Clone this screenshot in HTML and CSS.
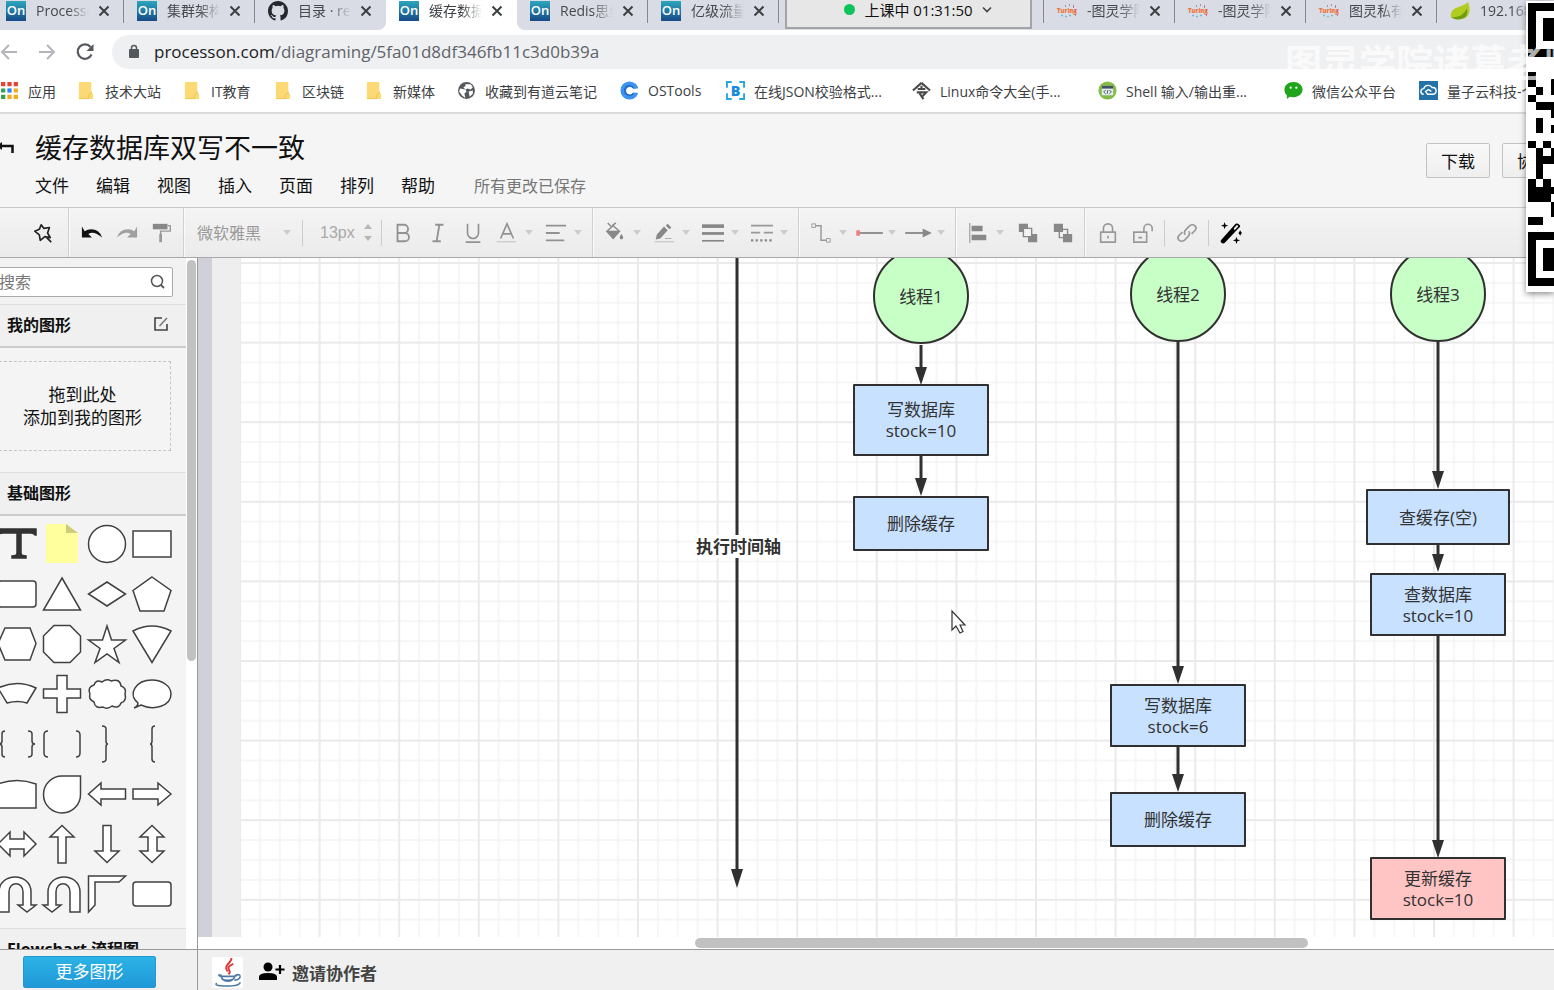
FILE: index.html
```html
<!DOCTYPE html>
<html lang="zh-CN">
<head>
<meta charset="utf-8">
<title>缓存数据库双写不一致</title>
<link rel="stylesheet" href="styles.css">
</head>
<body>
<svg class="defs" width="0" height="0" aria-hidden="true">
  <symbol id="close" viewBox="0 0 14 14"><path d="M2.500 2.500l9 9m0-9l-9 9" fill="none" stroke="#3c4043" stroke-width="2"/></symbol>
  <symbol id="folder" viewBox="0 0 18 20"><path d="M2 1h11q1 0 1 1v10l2 2v4q0 1-1 1H2q-1 0-1-1V2q0-1 1-1z" fill="#fbd975"/><path d="M11 19v-4q0-2 3-2v-2M1 18.500h11" fill="none" stroke="#f0c64e"/></symbol>
  <symbol id="caret" viewBox="0 0 8 6"><path d="M0 0h8L4 5z" fill="#ccc"/></symbol>
</svg>

<nav class="tabs" aria-label="标签页">
  <div class="tab"><span class="on">On</span><span class="tab-label">Processon</span><button class="tab-x" aria-label="关闭"><svg><use href="#close"/></svg></button></div>
  <div class="tab"><span class="on">On</span><span class="tab-label">集群架构图</span><button class="tab-x" aria-label="关闭"><svg><use href="#close"/></svg></button></div>
  <div class="tab before-active"><svg class="fav" viewBox="0 0 16 16"><path fill="#24292e" d="M8 0C3.580 0 0 3.580 0 8c0 3.540 2.290 6.530 5.470 7.590.4.070.55-.17.55-.38v-1.490c-2.010.37-2.530-.49-2.690-.94-.09-.23-.48-.94-.82-1.130-.28-.15-.68-.52-.01-.53.63-.01 1.080.58 1.230.82.72 1.210 1.870.87 2.330.66.070-.52.280-.87.510-1.070-1.780-.2-3.640-.89-3.640-3.950 0-.87.310-1.590.820-2.150-.08-.2-.36-1.020.08-2.120 0 0 .67-.21 2.200.82a7.600 7.600 0 014 0c1.530-1.040 2.200-.82 2.200-.82.44 1.100.16 1.920.08 2.120.51.560.82 1.270.82 2.150 0 3.070-1.870 3.750-3.650 3.950.29.25.54.73.54 1.480v2.200c0 .21.15.46.55.38A8 8 0 0016 8c0-4.420-3.580-8-8-8z"/></svg><span class="tab-label">目录 · redis</span><button class="tab-x" aria-label="关闭"><svg><use href="#close"/></svg></button></div>
  <div class="tab active"><span class="on">On</span><span class="tab-label">缓存数据库</span><button class="tab-x" aria-label="关闭"><svg><use href="#close"/></svg></button></div>
  <div class="tab after-active"><span class="on">On</span><span class="tab-label">Redis思维</span><button class="tab-x" aria-label="关闭"><svg><use href="#close"/></svg></button></div>
  <div class="tab"><span class="on">On</span><span class="tab-label">亿级流量</span><button class="tab-x" aria-label="关闭"><svg><use href="#close"/></svg></button></div>
  <div class="tab covered"></div>
  <div class="tab"><svg class="fav" viewBox="0 0 20 20"><text class="fav-text" x="0" y="12">Turing</text><path d="M4 14.500h2m2 1h2m2-1h2" stroke="#78b7d8" stroke-width="1.500"/><path d="M8 5h1m3-1h1m3 1h1m1 5h1m-1 4h1m-3-8h1" stroke="#a66ca0" stroke-width="1.500"/></svg><span class="tab-label">-图灵学院</span><button class="tab-x" aria-label="关闭"><svg><use href="#close"/></svg></button></div>
  <div class="tab"><svg class="fav" viewBox="0 0 20 20"><text class="fav-text" x="0" y="12">Turing</text><path d="M4 14.500h2m2 1h2m2-1h2" stroke="#78b7d8" stroke-width="1.500"/><path d="M8 5h1m3-1h1m3 1h1m1 5h1m-1 4h1m-3-8h1" stroke="#a66ca0" stroke-width="1.500"/></svg><span class="tab-label">-图灵学院</span><button class="tab-x" aria-label="关闭"><svg><use href="#close"/></svg></button></div>
  <div class="tab"><svg class="fav" viewBox="0 0 20 20"><text class="fav-text" x="0" y="12">Turing</text><path d="M4 14.500h2m2 1h2m2-1h2" stroke="#78b7d8" stroke-width="1.500"/><path d="M8 5h1m3-1h1m3 1h1m1 5h1m-1 4h1m-3-8h1" stroke="#a66ca0" stroke-width="1.500"/></svg><span class="tab-label">图灵私有</span><button class="tab-x" aria-label="关闭"><svg><use href="#close"/></svg></button></div>
  <div class="tab tail"><svg class="fav" viewBox="0 0 20 20"><path d="M18 1c3 8 2 16-6 17-4 1-8 0-11-2C0 5 10 8 18 1z" fill="#b3cc22"/><path d="M1 16c7 1 13-2 16-9 1 7-1 10-6 11-4 1-8 0-10-2z" fill="#6c9e12"/></svg><span class="tab-label">192.168.0</span></div>
  <button class="meeting"><span class="dot"></span>上课中 01:31:50<svg width="10" height="8" viewBox="0 0 10 8"><path d="M1 1.500l4 4 4-4" fill="none" stroke="#444" stroke-width="1.600"/></svg></button>
</nav>

<div class="urlbar">
  <button class="nav" aria-label="后退"><svg width="20" height="20" viewBox="0 0 20 20"><path d="M18 10H3m7-7l-7 7 7 7" fill="none" stroke="#b4b6b9" stroke-width="2"/></svg></button>
  <button class="nav" aria-label="前进"><svg width="20" height="20" viewBox="0 0 20 20"><path d="M2 10h15m-7-7l7 7-7 7" fill="none" stroke="#b4b6b9" stroke-width="2"/></svg></button>
  <button class="nav" aria-label="刷新"><svg width="20" height="20" viewBox="0 0 20 20"><path d="M16.500 12.500A7.200 7.200 0 1 1 15.500 5" fill="none" stroke="#55585c" stroke-width="2.200"/><path d="M18.500 2v7h-7z" fill="#55585c"/></svg></button>
  <div class="address"><svg width="12" height="16" viewBox="0 0 12 16"><rect x="1" y="5" width="10" height="9" rx="1" fill="#55585c"/><path d="M3.500 6V4a2.500 2.500 0 0 1 5 0v2" fill="none" stroke="#55585c" stroke-width="1.500"/></svg><a href="#"><b>processon.com</b>/diagraming/5fa01d8df346fb11c3d0b39a</a></div>
</div>

<nav class="bookmarks" aria-label="书签">
  <a href="#"><svg viewBox="0 0 18 18"><path d="M1 1h4v4H1zM7 1h4v4H7zM13 1h4v4h-4z" fill="#e34335"/><path d="M1 7h4v4H1zM1 13h4v4H1z" fill="#34a056"/><path d="M7 7h4v4H7z" fill="#2a85f0"/><path d="M13 7h4v4h-4zM7 13h4v4H7zM13 13h4v4h-4z" fill="#f3aa18"/></svg>应用</a>
  <a href="#"><svg><use href="#folder"/></svg>技术大站</a>
  <a href="#"><svg><use href="#folder"/></svg>IT教育</a>
  <a href="#"><svg><use href="#folder"/></svg>区块链</a>
  <a href="#"><svg><use href="#folder"/></svg>新媒体</a>
  <a href="#"><svg viewBox="0 0 18 18"><circle cx="9" cy="9" r="8" fill="#55585c"/><path d="M3 7l5 1 1 2-2 2 1 4-3-2-3-4zM8 3l5 0 2 3-2 2-3-1-2 1-2-2 2-1zM11 10l4-1 0 3-3 3z" fill="#fff"/></svg>收藏到有道云笔记</a>
  <a href="#"><svg viewBox="0 0 20 20"><circle cx="10" cy="10" r="9.500" fill="#3b92f3"/><path d="M20 7.500l-6 1a4 4 0 1 0 0 3.500l6 .5z" fill="#fff"/><path d="M14 7a5 5 0 1 0 0 6" fill="none" stroke="#1b5ba5" stroke-width="1.200"/></svg>OSTools</a>
  <a href="#"><svg viewBox="0 0 20 20"><path d="M1 7V1h5m8 0h5v6m0 6v6h-5m-8 0H1v-6" fill="none" stroke="#25a7df" stroke-width="2"/><text class="logo-b" x="5" y="16">B</text></svg>在线JSON校验格式...</a>
  <a href="#"><svg viewBox="0 0 20 20"><path d="M10 2L1 10M10 2l9 8M6 8.500l8 0M5 12h10l-4 4M8 13l4 6M10 5v3" fill="none" stroke="#4a4a4a" stroke-width="2.200"/></svg>Linux命令大全(手...</a>
  <a href="#"><svg viewBox="0 0 20 20"><circle cx="10" cy="10" r="9.500" fill="#83bd45"/><rect x="4" y="5" width="12" height="10" rx="1" fill="#e5ecef"/><path d="M4 5h12v3H4z" fill="#45505c"/><path d="M8 9.500L6 11.500l2 2m4-4l2 2-2 2m-1.500-4l-1 4" fill="none" stroke="#45505c"/></svg>Shell 输入/输出重...</a>
  <a href="#"><svg viewBox="0 0 20 20"><path d="M10 1c5.500 0 9.500 3.500 9.500 8s-4 8-9.500 8q-2 0-4-.5L3 19v-4C1 13.500.5 11 .5 9c0-4.500 4-8 9.500-8z" fill="#1fa51b"/><circle cx="7" cy="7" r="1.200" fill="#fff"/><circle cx="13" cy="7" r="1.200" fill="#fff"/></svg>微信公众平台</a>
  <a href="#"><svg viewBox="0 0 20 20"><path d="M0 0h20v20H0z" fill="#2472a8"/><path d="M5 14a3 3 0 0 1 0-6 5 5 0 0 1 9-1 3.500 3.500 0 0 1 1 7H9l-2-3 3-2 3 2" fill="none" stroke="#fff" stroke-width="1.500"/></svg>量子云科技-个</a>
</nav>

<header class="head">
  <button class="back" aria-label="返回"><svg width="16" height="18" viewBox="0 0 16 18"><path d="M0 7h12.500v7" fill="none" stroke="#111" stroke-width="2.500"/><path d="M2 3v8L-3 7z" fill="#111"/></svg></button>
  <div class="head-main">
    <h1>缓存数据库双写不一致</h1>
    <div class="menu"><button>文件</button><button>编辑</button><button>视图</button><button>插入</button><button>页面</button><button>排列</button><button>帮助</button><span>所有更改已保存</span></div>
  </div>
  <div class="head-actions"><button>下载</button><button>协作</button></div>
</header>

<div class="toolbar" role="toolbar">
  <div class="group first"><button class="tool" aria-label="图标"><svg viewBox="0 0 24 24"><path d="M10 3l3 4 6-1-2 6 3 5-6-1-5 4-1-6-5-4 5-2zM16 17l5 5" fill="none" stroke="#222" stroke-width="1.800" stroke-linejoin="round"/></svg></button></div>
  <div class="group"><button class="tool" aria-label="撤销"><svg viewBox="0 0 24 24"><path d="M1 5v12h11l-4-4q6-4 15 4-3-9-12-9-4 0-7 2z" fill="#111"/></svg></button><button class="tool" aria-label="重做"><svg viewBox="0 0 24 24"><path d="M23 5v12H12l4-4Q10 9 1 17q3-9 12-9 4 0 7 2z" fill="#a0a0a0"/></svg></button><button class="tool" aria-label="格式刷"><svg viewBox="0 0 24 24"><path d="M2 2h16v6H2z" fill="#888"/><path d="M18 4h3v6H10.500v4" fill="none" stroke="#999" stroke-width="1.500"/><path d="M9 13h3v9H9z" fill="#999"/></svg></button></div>
  <div class="group">
    <select class="font" aria-label="字体"><option>微软雅黑</option></select><svg class="caret"><use href="#caret"/></svg>
    <i class="sep"></i><input class="size" aria-label="字号" value="13px"><svg class="spin" viewBox="0 0 8 18"><path d="M0 5h8L4 0zM0 12h8l-4 5z" fill="#b5b5b5"/></svg>
    <i class="sep"></i>
    <button class="tool" aria-label="粗体"><svg viewBox="0 0 24 24"><path d="M6 3h7a4.500 4.500 0 0 1 0 9H6zm0 9h8a4.500 4.500 0 0 1 0 9H6z" fill="none" stroke="#929292" stroke-width="2"/></svg></button>
    <button class="tool" aria-label="斜体"><svg viewBox="0 0 24 24"><path d="M9 3h9M6 21h9m-1.500-18l-3 18" fill="none" stroke="#929292" stroke-width="2"/></svg></button>
    <button class="tool" aria-label="下划线"><svg viewBox="0 0 24 24"><path d="M6 2v10a6 6 0 0 0 12 0V2M4 22h16" fill="none" stroke="#929292" stroke-width="1.800"/></svg></button>
    <button class="tool drop" aria-label="文字颜色"><svg viewBox="0 0 24 24"><path d="M5 18l7-16 7 16M8 13h8" fill="none" stroke="#929292" stroke-width="1.800"/><path d="M1 21.500h21" stroke="#ccc" stroke-width="1.500"/></svg><svg class="caret"><use href="#caret"/></svg></button>
    <button class="tool drop" aria-label="对齐"><svg viewBox="0 0 24 24"><path d="M1 4h22M1 12h15M1 20h20" stroke="#929292" stroke-width="2"/></svg><svg class="caret"><use href="#caret"/></svg></button>
  </div>
  <div class="group">
    <button class="tool drop" aria-label="填充"><svg viewBox="0 0 24 24"><path d="M2 10L10 3l8 7-8 9z" fill="#888"/><path d="M5 9.500l5-4.500 5 4.500z" fill="#eee"/><path d="M4 1l4 4M13 1L9 4" stroke="#888" stroke-width="1.500"/><path d="M19 13q4 5 0 6-4-1 0-6z" fill="#888"/></svg><svg class="caret"><use href="#caret"/></svg></button>
    <button class="tool drop" aria-label="线条颜色"><svg viewBox="0 0 24 24"><path d="M4 14L12 5l4 4-8 9-5 1zM14 4l2-2 4 4-2 2z" fill="#888"/><path d="M13 18h7" stroke="#aaa"/><path d="M2 21.500h21" stroke="#ccc" stroke-width="1.500"/></svg><svg class="caret"><use href="#caret"/></svg></button>
    <button class="tool drop" aria-label="线宽"><svg viewBox="0 0 24 24"><path d="M0 4.500h24" stroke="#888" stroke-width="4"/><path d="M0 12.500h24" stroke="#888" stroke-width="3"/><path d="M0 20.500h24" stroke="#888" stroke-width="1.800"/></svg><svg class="caret"><use href="#caret"/></svg></button>
    <button class="tool drop" aria-label="线型"><svg viewBox="0 0 24 24"><path d="M0 4h24M0 11.500h10m4 0h10" stroke="#999" stroke-width="2"/><path d="M0 20h24" stroke="#888" stroke-width="2.500" stroke-dasharray="2.500 2.500"/></svg><svg class="caret"><use href="#caret"/></svg></button>
  </div>
  <div class="group">
    <button class="tool drop" aria-label="连线"><svg viewBox="0 0 24 24"><path d="M6 4h6v16h6" fill="none" stroke="#999" stroke-width="1.600"/><path d="M2 2h4v4H2zM18 18h4v4h-4z" fill="#eee" stroke="#999"/></svg><svg class="caret"><use href="#caret"/></svg></button>
    <button class="tool drop" aria-label="起点"><svg viewBox="0 0 24 24"><path d="M-2 12h28" stroke="#888" stroke-width="2"/><path d="M-3 9l4 0v6h-4z" fill="#f08080"/></svg><svg class="caret"><use href="#caret"/></svg></button>
    <button class="tool drop" aria-label="终点"><svg viewBox="0 0 24 24"><path d="M-3 12h20" stroke="#888" stroke-width="2"/><path d="M16 7l10 5-10 5z" fill="#888"/></svg><svg class="caret"><use href="#caret"/></svg></button>
  </div>
  <div class="group">
    <button class="tool drop" aria-label="排列"><svg viewBox="0 0 24 24"><path d="M3 1v22" stroke="#aaa" stroke-width="1.500"/><path d="M5 4h12v6H5zM5 14h16v6H5z" fill="#888"/></svg><svg class="caret"><use href="#caret"/></svg></button>
    <button class="tool" aria-label="置于顶层"><svg viewBox="0 0 24 24"><path d="M2 2h10v9H2zM12 13h10v9H12z" fill="#888"/><path d="M7 7h9v9H7z" fill="#f3f3f3" stroke="#888" stroke-width="1.500"/></svg></button>
    <button class="tool" aria-label="置于底层"><svg viewBox="0 0 24 24"><path d="M8 8h9v9H8z" fill="none" stroke="#888" stroke-width="1.500"/><path d="M2 2h10v9H2zM12 13h10v9H12z" fill="#888"/></svg></button>
  </div>
  <div class="group last">
    <button class="tool" aria-label="锁定"><svg viewBox="0 0 24 24"><path d="M4 11h16v11H4zM7 11V7a5 5 0 0 1 10 0v4M12 15v3" fill="none" stroke="#999" stroke-width="1.800"/></svg></button>
    <button class="tool" aria-label="解锁"><svg viewBox="0 0 24 24"><path d="M2 11h14v11H2zM13 11V7a4.500 4.500 0 0 1 9 0v3M7 17h4" fill="none" stroke="#999" stroke-width="1.800"/></svg></button>
    <i class="sep"></i>
    <button class="tool" aria-label="链接"><svg viewBox="0 0 24 24"><path d="M10 14q-2-3 1-6l4-4q3-2 5.500 0t.5 5l-4 4M14 10q2 3-1 6l-4 4q-3 2-5.500 0T3 15l4-4" fill="none" stroke="#999" stroke-width="1.800"/></svg></button>
    <i class="sep"></i>
    <button class="tool" aria-label="美化"><svg viewBox="0 0 24 24"><path d="M1 20L17 2q2-1 4 1t0 3L5 23q-2 1-3.500-.5T1 20z" fill="#000"/><path d="M15 7l3.500-4 1.500 1.500L16 9z" fill="#eee"/><path d="M5 0l1 3 3 1-3 1-1 3-1-3-3-1 3-1zM18 16l1 3 3 1-3 1-1 3-1-3-3-1 3-1zM22 9l1 2 1 1-1 1-1 2-1-2-1-1 1-1z" fill="#000"/></svg></button>
  </div>
</div>

<main class="work">
  <aside class="side">
    <div class="side-scroll">
      <div class="search"><input type="text" placeholder="搜索" aria-label="搜索"><svg viewBox="0 0 16 16"><circle cx="7" cy="7" r="5.500" fill="none" stroke="#555" stroke-width="1.500"/><path d="M11 11l3 3" stroke="#555" stroke-width="1.800"/></svg></div>
      <h2>我的图形<button aria-label="编辑"><svg width="16" height="16" viewBox="0 0 16 16"><path d="M9 2H2v12h12V8" fill="none" stroke="#444" stroke-width="1.600"/><path d="M6.500 10L14 2" stroke="#777" stroke-width="1.500"/></svg></button></h2>
      <div class="drop-area"><p>拖到此处<br>添加到我的图形</p></div>
      <h2>基础图形</h2>
      <div class="shapes">
        <svg viewBox="0 0 44 44"><path d="M3 7h38v6h-1q-1-2-4-2H26v20q0 3 5 3v2H17v-2q5 0 5-3V11H8q-4 0-5 2z" fill="#323232" stroke="#323232"/></svg>
        <svg viewBox="0 0 44 44"><path d="M6 2h20l12 9v30H6z" fill="#ffff9e" stroke="none"/><path d="M26 2l12 9H26z" fill="#cccc7b" stroke="none"/></svg>
        <svg viewBox="0 0 44 44"><circle cx="22" cy="22" r="18.500"/></svg>
        <svg viewBox="0 0 44 44"><path d="M3 9h38v26H3z"/></svg>
        <svg viewBox="0 0 44 44"><rect x="3" y="9" width="38" height="26" rx="3"/></svg>
        <svg viewBox="0 0 44 44"><path d="M22 6l18.500 32h-37z"/></svg>
        <svg viewBox="0 0 44 44"><path d="M22 10l18.500 12L22 34 3.500 22z"/></svg>
        <svg viewBox="0 0 44 44"><path d="M22 5l19 13.500L34 39H10L3 18.500z"/></svg>
        <svg viewBox="0 0 44 44"><path d="M10 6h25l6 15.500L35 38H10L3 21.500z"/></svg>
        <svg viewBox="0 0 44 44"><path d="M14 3.500h16L40.500 14v16L30 40.500H14L3.500 30V14z"/></svg>
        <svg viewBox="0 0 44 44"><path d="M22 4l4.500 14h14L29 26.500l5 14L22 32l-12 8.500 5-14L3.500 18h14z"/></svg>
        <svg viewBox="0 0 44 44"><path d="M3 9Q22-1 41 9L22 40.500z"/></svg>
        <svg viewBox="0 0 44 44"><path d="M3 16q19-9 38 0l-9 15q-9-3-20 0z"/></svg>
        <svg viewBox="0 0 44 44"><path d="M17 3.500h10V17h13.500v9H27v14.500H17V26H3.500v-9H17z"/></svg>
        <svg viewBox="0 0 44 44"><path d="M9 13q2-6 8-3 5-4 9-1 9-3 10 5 6 2 4 8 2 7-4 9-2 6-9 3-5 4-9 1-8 2-9-5-6-3-4-8-3-7 4-9z"/></svg>
        <svg viewBox="0 0 44 44"><path d="M8 31C-3 22 6 8 22 8c10 0 19 6 19 14 0 12-17 17-30 11l-7 3q4-2 4-5z"/></svg>
        <svg viewBox="0 0 44 44"><path d="M10 9q-3 0-3 3v7q0 3-3 3 3 0 3 3v7q0 3 3 3M33 9q4 0 4 3v7q0 3 3 3-3 0-3 3v7q0 3-4 3" fill="none"/></svg>
        <svg viewBox="0 0 44 44"><path d="M8 9q-4 0-4 4v18q0 4 4 4M36 9q4 0 4 4v18q0 4-4 4" fill="none"/></svg>
        <svg viewBox="0 0 44 44"><path d="M17 4q4 0 4 3v12q0 3 2 3-2 0-2 3v12q0 3-4 3" fill="none"/></svg>
        <svg viewBox="0 0 44 44"><path d="M25 4q-3 0-3 3v12q0 3-2 3 2 0 2 3v12q0 3 3 3" fill="none"/></svg>
        <svg viewBox="0 0 44 44"><path d="M3 12q19-7 38 0v24H3z"/></svg>
        <svg viewBox="0 0 44 44"><path d="M22 4h18.500v18A18.500 18.500 0 1 1 22 4z"/></svg>
        <svg viewBox="0 0 44 44"><path d="M3.500 22L16 11v6h24.500v10H16v6z"/></svg>
        <svg viewBox="0 0 44 44"><path d="M41 22L28 11v6H3v10h25v6z"/></svg>
        <svg viewBox="0 0 44 44"><path d="M3 22l12-12v7h14v-7l12 12-12 12v-7H15v7z"/></svg>
        <svg viewBox="0 0 44 44"><path d="M22 3.500L34 15h-8v26h-8V15h-8z"/></svg>
        <svg viewBox="0 0 44 44"><path d="M22 40.500L10 29h8V3.500h8V29h8z"/></svg>
        <svg viewBox="0 0 44 44"><path d="M22 3.500L34 15h-7v14h7L22 40.500 10 29h8V15h-8z"/></svg>
        <svg viewBox="0 0 44 44"><path d="M4 40V20C4 0 36 0 36 20v13h5l-9 7-9-7h5V20c0-11-14-11-14 0v20z"/></svg>
        <svg viewBox="0 0 44 44"><path d="M40 40V20C40 0 8 0 8 20v13H3l9 7 9-7h-5V20c0-11 14-11 14 0v20z"/></svg>
        <svg viewBox="0 0 44 44"><path d="M3.500 4h37L34 10H10v23l-6.500 7z"/></svg>
        <svg viewBox="0 0 44 44"><rect x="3" y="10" width="38" height="24" rx="3"/></svg>
      </div>
      <h2>Flowchart 流程图</h2>
    </div>
    <div class="v-track"><div class="v-thumb"></div></div>
  </aside>

  <section class="stage">
    <div class="ruler"></div>
    <div class="canvas">
      <svg class="paper" width="100%" height="100%">
        <defs>
          <pattern id="grid" width="80" height="80" patternUnits="userSpaceOnUse" patternTransform="translate(0 5) scale(.995)">
            <path d="M20 0v80M40 0v80M60 0v80M0 20h80M0 40h80M0 60h80" stroke="#f3f3f3" stroke-width="1.500"/>
            <path d="M0 0v80M80 0v80M0 0h80M0 80h80" stroke="#eaeaea" stroke-width="2"/>
          </pattern>
        </defs>
        <rect width="100%" height="100%" fill="url(#grid)"/>
        <g class="lines">
          <path d="M497 0v612"/><path d="M681 87v24"/><path d="M681 198v24"/><path d="M938 84v324"/><path d="M938 489v27"/><path d="M1198 84v129"/><path d="M1198 287v12"/><path d="M1198 378v204"/>
        </g>
        <path d="M491 611h12l-6 19zM675 109h12l-6 18zM675 220h12l-6 18zM932 408h12l-6 18zM932 516h12l-6 18zM1192 213h12l-6 18zM1192 296h12l-6 18zM1192 582h12l-6 18z" fill="#303030"/>
      </svg>
      <strong class="axis">执行时间轴</strong>
      <div class="node round n1">线程1</div>
      <div class="node round n2">线程2</div>
      <div class="node round n3">线程3</div>
      <div class="node n4">写数据库<br>stock=10</div>
      <div class="node n5">删除缓存</div>
      <div class="node n6">写数据库<br>stock=6</div>
      <div class="node n7">删除缓存</div>
      <div class="node n8">查缓存(空)</div>
      <div class="node n9">查数据库<br>stock=10</div>
      <div class="node red n10">更新缓存<br>stock=10</div>
      <svg class="cursor" width="16" height="24" viewBox="0 0 16 24"><path d="M1 1v19l4-4 4 7 3-1.500-3-6.500h5z" fill="#fff" stroke="#333" stroke-width="1.200"/></svg>
    </div>
    <div class="h-track"><div class="h-thumb"></div></div>
  </section>
</main>

<footer class="foot">
  <div class="foot-side"><button>更多图形</button></div>
  <div class="foot-main">
    <svg class="java" viewBox="0 0 32 32"><rect width="32" height="32" rx="2" fill="#fff"/><path d="M20 1c1 5-9 7-4 14M22 7c-7 3-5 5-4 7q1 2-1 4" fill="none" stroke="#e03a35" stroke-width="2"/><path d="M8 18q-4 2 8 2t9-2M9 18q1 7 7 7t8-6q5-2 5 1t-6 4M10 23q6 2 12 0M5 27q-4 3 10 3t14-4" fill="none" stroke="#4a79a8" stroke-width="1.600"/></svg>
    <button class="invite"><svg width="26" height="20" viewBox="0 0 26 20"><circle cx="9" cy="5" r="4.500" fill="#000"/><path d="M0 18v-3q0-4 9-4t9 4v3z" fill="#000"/><path d="M21 3v9m-4.500-4.500h9" stroke="#000" stroke-width="2.200"/></svg>邀请协作者</button>
  </div>
</footer>

<div class="qr" role="img" aria-label="二维码"><svg width="38" height="283" viewBox="0 0 5 37" preserveAspectRatio="none" shape-rendering="crispEdges"><path d="M0 0h5v1H0zM0 1h1v5H0zM2 2h3v3H2zM0 6h5v1H0zM0 9h1v2H0zM3 10h1v2H3zM1 11h1v1H1zM0 12h1v1H0zM1 13h4v1H1zM3 14h2v1H3zM1 15h1v2H1zM3 16h1v1H3zM0 18h1v1H0zM2 18h1v1H2zM1 19h1v4H1zM3 19h1v2H3zM2 20h1v1H2zM0 23h1v3H0zM2 23h1v3H2zM1 24h1v2H1zM3 24h1v1H3zM3 26h2v2H3zM0 28h2v1H0zM0 30h5v1H0zM0 31h1v5H0zM2 32h3v3H2zM0 36h5v1H0z"/></svg></div>
<div class="watermark">图灵学院诸葛老师</div>
</body>
</html>
```
FILE: styles.css
```css
* { box-sizing: border-box; }
html, body { height: 100%; }
body {
  margin: 0;
  display: flex;
  flex-direction: column;
  position: relative;
  overflow: hidden;
  background: #fff;
  color: #111;
  font-family: "Open Sans", "Noto Sans CJK SC", sans-serif;
  font-size: 17px;
}
button, input, select { font: inherit; color: inherit; background: none; border: 0; padding: 0; margin: 0; }
button { cursor: pointer; white-space: nowrap; }
a { color: inherit; text-decoration: none; }
svg { display: block; flex: none; overflow: visible; }
.defs { position: absolute; }

/* browser tabs */
.tabs { display: flex; flex: none; height: 30px; margin-left: -7px; background: #fff; position: relative; }
.tab { display: flex; flex: none; width: 131px; height: 30px; padding: 0 0 9px 13px; align-items: center; position: relative; font-size: 14px; color: #45484d; background: #d9dce4; }
.tab::after { content: ""; position: absolute; right: 0; top: 0; width: 1px; height: 23px; background: #84878d; }
.tab.active { background: #fff; color: #3c4043; }
.tab.active::after, .tab.before-active::after, .tab.tail::after { display: none; }
.before-active { border-bottom-right-radius: 8px; }
.after-active { border-bottom-left-radius: 8px; }
.tab.covered { width: 265px; }
.tab.tail { flex: 1; }
.on { flex: none; width: 20px; height: 20px; margin-right: 10px; background: linear-gradient(#2ca6bd, #174b87); color: #fff; font-size: 13px; font-weight: 600; line-height: 18px; text-align: center; }
.fav { width: 20px; height: 20px; margin-right: 10px; }
.fav-text { font-size: 6px; font-weight: 800; fill: #ee7440; }
.logo-b { font-size: 15px; font-weight: 800; fill: #1689e0; }
.tab-label { width: 53px; height: 20px; line-height: 20px; white-space: nowrap; overflow: hidden; -webkit-mask-image: linear-gradient(90deg, #000 60%, transparent); mask-image: linear-gradient(90deg, #000 60%, transparent); }
.tab-x { margin-left: 8px; }
.tab-x svg { width: 14px; height: 14px; }
.meeting { position: absolute; left: 792px; top: -5px; width: 247px; height: 34px; display: flex; align-items: center; justify-content: center; gap: 9px; background: #e7e7e7; border: 2px solid #a3a4a7; font-size: 15px; color: #111; padding: 0 0 5px 19px; }
.dot { width: 11px; height: 11px; border-radius: 50%; background: #0fc35c; }

/* address row */
.urlbar { flex: none; display: flex; align-items: center; height: 42px; padding-top: 1px; }
.nav { width: 38px; display: flex; justify-content: center; }
.nav:first-child { margin-left: -10px; }
.nav:nth-child(3) { margin-right: 8px; }
.address { flex: 1; height: 34px; padding-left: 16px; display: flex; align-items: center; gap: 14px; border-radius: 17px 0 0 17px; background: #eff0f2; color: #606368; font-size: 17px; }
.address b { font-weight: 400; color: #202124; }

/* bookmarks */
.bookmarks { flex: none; height: 42px; display: grid; grid-template-columns: 77px 106px 91px 91px 92px 163px 106px 186px 186px 186px 135px 1fr; align-items: center; padding-bottom: 3px; border-bottom: 2px solid #dcdcdc; font-size: 14px; color: #3c4043; }
.bookmarks a { display: flex; align-items: center; gap: 9px; white-space: nowrap; }
.bookmarks svg { width: 19px; height: 19px; }

/* document header */
.head { flex: none; display: flex; height: 94px; background: #f5f5f5; border-bottom: 1px solid #c8c8c8; }
.back { width: 35px; align-self: flex-start; padding-top: 25px; }
.head-main { flex: 1; }
.head h1 { margin: 16px 0 0; font-size: 27px; line-height: 36px; font-weight: 400; }
.menu { display: flex; gap: 27px; line-height: 24px; margin-top: 8px; align-items: center; }
.menu span { margin-left: 12px; font-size: 16px; color: #777; }
.head-actions { display: flex; flex: none; gap: 12px; padding-top: 29px; margin-right: -12px; }
.head-actions button { width: 64px; height: 35px; border: 1px solid #c3c3c3; border-radius: 2px; background: linear-gradient(#f8f8f8, #efefef); }

/* toolbar */
.toolbar { flex: none; display: flex; height: 50px; background: linear-gradient(#f4f4f4, #ebebeb); border-bottom: 1px solid #a8a8a8; }
.group { display: flex; align-items: center; padding: 0 4px 0 5px; border-right: 1px solid #d0d0d0; box-shadow: 1px 0 #fafafa; }
.group.first { padding-left: 25px; padding-right: 8px; }
.group.last { border: 0; box-shadow: none; }
.tool { width: 35px; height: 40px; display: flex; align-items: center; justify-content: center; }
.tool svg { width: 22px; height: 22px; }
.tool.drop { width: 49px; justify-content: flex-start; gap: 7px; padding-left: 6px; }
.tool .caret, .caret { width: 8px; height: 6px; }
.sep { width: 1px; height: 26px; margin: 0 3px; background: #ccc; }
.group.last .sep { margin: 0 4px; }
.font { appearance: none; width: 86px; margin-left: 8px; font-size: 16px; color: #999; }
.font + .caret { margin-right: 8px; }
.size { width: 40px; margin-left: 14px; font-size: 16px; color: #aaa; font-family: "Liberation Sans", sans-serif; }
.spin { width: 8px; height: 18px; margin: 0 6px 0 4px; }

/* shape library */
.work { flex: 1; min-height: 0; display: flex; }
.side { flex: none; width: 198px; display: flex; border-right: 1px solid #999; background: #fff; overflow: hidden; }
.side-scroll { flex: none; width: 186px; background: #f4f4f4; overflow: hidden; }
.search { position: relative; height: 46px; padding-top: 9px; margin-left: -6px; background: #f2f2f2; }
.search input { display: block; width: 179px; height: 30px; border: 1px solid #aaa; border-radius: 2px; background: #fff; padding-left: 4px; font-size: 16px; }
.search input::placeholder { color: #777; }
.search svg { position: absolute; right: 20px; top: 16px; width: 16px; height: 16px; }
.side h2 { display: flex; justify-content: space-between; align-items: center; height: 44px; margin: 0; padding: 0 17px 3px 7px; border-top: 1px solid #ddd; border-bottom: 2px solid #ccc; background: #f0f0f0; font-size: 16px; font-weight: 700; white-space: nowrap; }
.drop-area { padding: 13px 15px 21px 0; margin-left: -6px; }
.drop-area p { margin: 0; height: 90px; padding-top: 21px; border: 1px dashed #c5c5c5; text-align: center; line-height: 23px; font-size: 17px; }
.shapes { display: grid; grid-template-columns: repeat(4, 45px); grid-auto-rows: 50px; align-items: center; justify-items: center; margin: 3px 0 9px -6px; }
.shapes svg { width: 44px; height: 44px; fill: #fff; stroke: #404040; stroke-width: 1.5px; }
.v-track { flex: 1; padding: 2px 1px; }
.v-thumb { height: 401px; border-radius: 5px; background: #c1c1c1; }

/* drawing area */
.stage { flex: 1; min-width: 0; display: grid; grid-template: 1fr 12px / 42px 1fr; }
.ruler { background: linear-gradient(90deg, #d0d1d8 14px, #eee 14px); }
.canvas { position: relative; overflow: hidden; color: #323232; }
.h-track { grid-column: 1 / 3; background: #fff; padding-top: 1px; }
.h-thumb { width: 613px; height: 10px; margin-left: 497px; border-radius: 5px; background: #c1c1c1; }
.paper { position: absolute; left: 0; top: 0; }
.lines { stroke: #303030; stroke-width: 3; fill: none; }
.node { position: absolute; display: flex; align-items: center; justify-content: center; text-align: center; width: 136px; height: 63px; border: 2px solid #303030; border-radius: 1px; background: #c7e1ff; font-size: 17px; line-height: 21px; }
.round { width: 96px; height: 96px; border-radius: 50%; background: #c7ffc7; }
.red { background: #ffc5c5; }
.n1 { left: 633px; top: -10px; }
.n2 { left: 890px; top: -12px; }
.n3 { left: 1150px; top: -12px; }
.n4 { left: 613px; top: 126px; height: 72px; }
.n5 { left: 613px; top: 238px; height: 55px; }
.n6 { left: 870px; top: 426px; }
.n7 { left: 870px; top: 534px; height: 55px; }
.n8 { left: 1126px; top: 231px; width: 144px; height: 56px; }
.n9 { left: 1130px; top: 315px; }
.n10 { left: 1130px; top: 599px; }
.axis { position: absolute; left: 456px; top: 277px; line-height: 23px; background: #fff; }
.cursor { position: absolute; left: 711px; top: 352px; }

/* bottom bar */
.foot { flex: none; display: flex; height: 41px; border-top: 1px solid #999; background: #f0f0f0; }
.foot-side { width: 198px; padding: 6px 0 0 23px; border-right: 1px solid #999; }
.foot-side button { width: 133px; height: 32px; padding-bottom: 3px; border-radius: 2px; background: linear-gradient(#2bb3e6, #2098d8); border: 1px solid #2596cf; color: #fff; }
.foot-main { display: flex; align-items: center; gap: 16px; padding: 4px 0 0 14px; }
.java { width: 31px; height: 31px; }
.invite { display: flex; align-items: center; gap: 7px; font-weight: 700; color: #444; }

/* overlays */
.qr { position: absolute; right: 0; top: 1px; width: 28px; height: 291px; padding: 2px 0 0 2px; overflow: hidden; background: #fff; box-shadow: 0 2px 6px rgba(0, 0, 0, .45); }
.watermark { position: absolute; right: -27px; top: 36px; font-size: 37px; line-height: 54px; font-weight: 700; color: rgba(255, 255, 255, .7); white-space: nowrap; }
```
